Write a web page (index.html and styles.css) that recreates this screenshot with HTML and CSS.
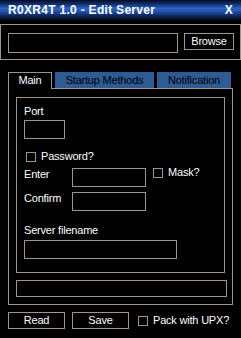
FILE: index.html
```html
<!DOCTYPE html>
<html lang="en">

<head>
    <meta charset="UTF-8">
    <meta name="viewport" content="width=device-width, initial-scale=1.0">
    <title>R0XR4T 1.0 - Edit Server</title>
    <link rel="stylesheet" href="styles.css">
</head>

<body>
    <div class="window">
        <div class="titlebar">
            <span class="title">R0XR4T 1.0 - Edit Server</span>
            <span class="close">X</span>
        </div>

        <div class="pathBx">
            <div class="field pathField"></div>
            <div class="btn browse">Browse</div>
        </div>

        <div class="tabs">
            <div class="tab active">Main</div>
            <div class="tab startup">Startup Methods</div>
            <div class="tab notify">Notification</div>
        </div>

        <div class="panel">
            <div class="group">
                <p class="label">Port</p>
                <div class="field portField"></div>

                <div class="check passRow">
                    <div class="box"></div>
                    <span>Password?</span>
                </div>

                <div class="row enterRow">
                    <p class="label rowLabel">Enter</p>
                    <div class="field pwField"></div>
                    <div class="check maskRow">
                        <div class="box"></div>
                        <span>Mask?</span>
                    </div>
                </div>

                <div class="row confirmRow">
                    <p class="label rowLabel">Confirm</p>
                    <div class="field pwField"></div>
                </div>

                <p class="label fileLabel">Server filename</p>
                <div class="field fileField"></div>
            </div>
            <div class="field statusField"></div>
        </div>

        <div class="bottom">
            <div class="btn action">Read</div>
            <div class="btn action save">Save</div>
            <div class="check upxRow">
                <div class="box"></div>
                <span>Pack with UPX?</span>
            </div>
        </div>
    </div>
</body>

</html>
```

FILE: styles.css
```css
* {
    margin: 0;
    padding: 0;
    box-sizing: border-box;
}

body {
    background-color: #000000;
    color: #ffffff;
    font-family: "Liberation Sans", Arial, sans-serif;
    font-size: 11px;
    line-height: 13px;
    letter-spacing: -0.2px;
}

.window {
    width: 241px;
    height: 338px;
    background-color: #000000;
}

.titlebar {
    display: flex;
    justify-content: space-between;
    align-items: center;
    height: 20px;
    padding: 0 8px 0 8px;
    background: linear-gradient(to bottom, #040b20 0%, #123274 22%, #2c62c6 42%, #2355ae 55%, #0e2558 80%, #03081a 100%);
    font-weight: bold;
    font-size: 12px;
    letter-spacing: 0.3px;
}

.close {
    font-size: 12px;
}

.field {
    border: 1px solid #a29382;
    background-color: #000000;
}

.btn {
    border: 1px solid #a29382;
    height: 17px;
    line-height: 15px;
    text-align: center;
}

.pathBx {
    display: flex;
    align-items: flex-start;
    margin-top: 4px;
    height: 36px;
    padding: 8px 6px 0 7px;
    border: 1px solid #a29382;
}

.pathField {
    width: 170px;
    height: 20px;
}

.browse {
    width: 50px;
    margin-left: 6px;
}

.tabs {
    display: flex;
    align-items: flex-start;
    gap: 3px;
    margin: 12px 0 0 8px;
    height: 16px;
}

.tab {
    height: 16px;
    line-height: 16px;
    text-align: center;
    background-color: #2d5b96;
    color: #000000;
}

.tab.active {
    position: relative;
    z-index: 1;
    width: 44px;
    height: 17px;
    line-height: 15px;
    background-color: #000000;
    color: #ffffff;
    border: 1px solid #a29382;
    border-bottom: none;
}

.startup {
    width: 99px;
}

.notify {
    width: 74px;
}

.panel {
    width: 225px;
    margin-left: 8px;
    padding: 8px 7px 7px 7px;
    border: 1px solid #a29382;
}

.group {
    padding: 7px 7px 13px 7px;
    border: 1px solid #a29382;
}

.portField {
    width: 41px;
    height: 19px;
    margin-top: 2px;
}

.check {
    display: flex;
    align-items: center;
}

.check .box {
    width: 10px;
    height: 10px;
    border: 1px solid #a29382;
    margin-right: 5px;
}

.passRow {
    height: 11px;
    line-height: 11px;
    margin: 12px 0 0 2px;
}

.row {
    display: flex;
    align-items: flex-start;
}

.rowLabel {
    width: 48px;
}

.pwField {
    width: 74px;
    height: 19px;
}

.enterRow {
    margin-top: 6px;
}

.maskRow {
    margin: -1px 0 0 7px;
    height: 11px;
}

.confirmRow {
    margin-top: 5px;
}

.fileLabel {
    margin-top: 13px;
}

.fileField {
    width: 153px;
    height: 19px;
    margin-top: 3px;
}

.statusField {
    width: 211px;
    height: 17px;
    margin-top: 7px;
}

.bottom {
    display: flex;
    align-items: center;
    margin: 7px 0 0 8px;
}

.action {
    width: 57px;
}

.save {
    margin-left: 7px;
}

.upxRow {
    margin-left: 9px;
}
```
